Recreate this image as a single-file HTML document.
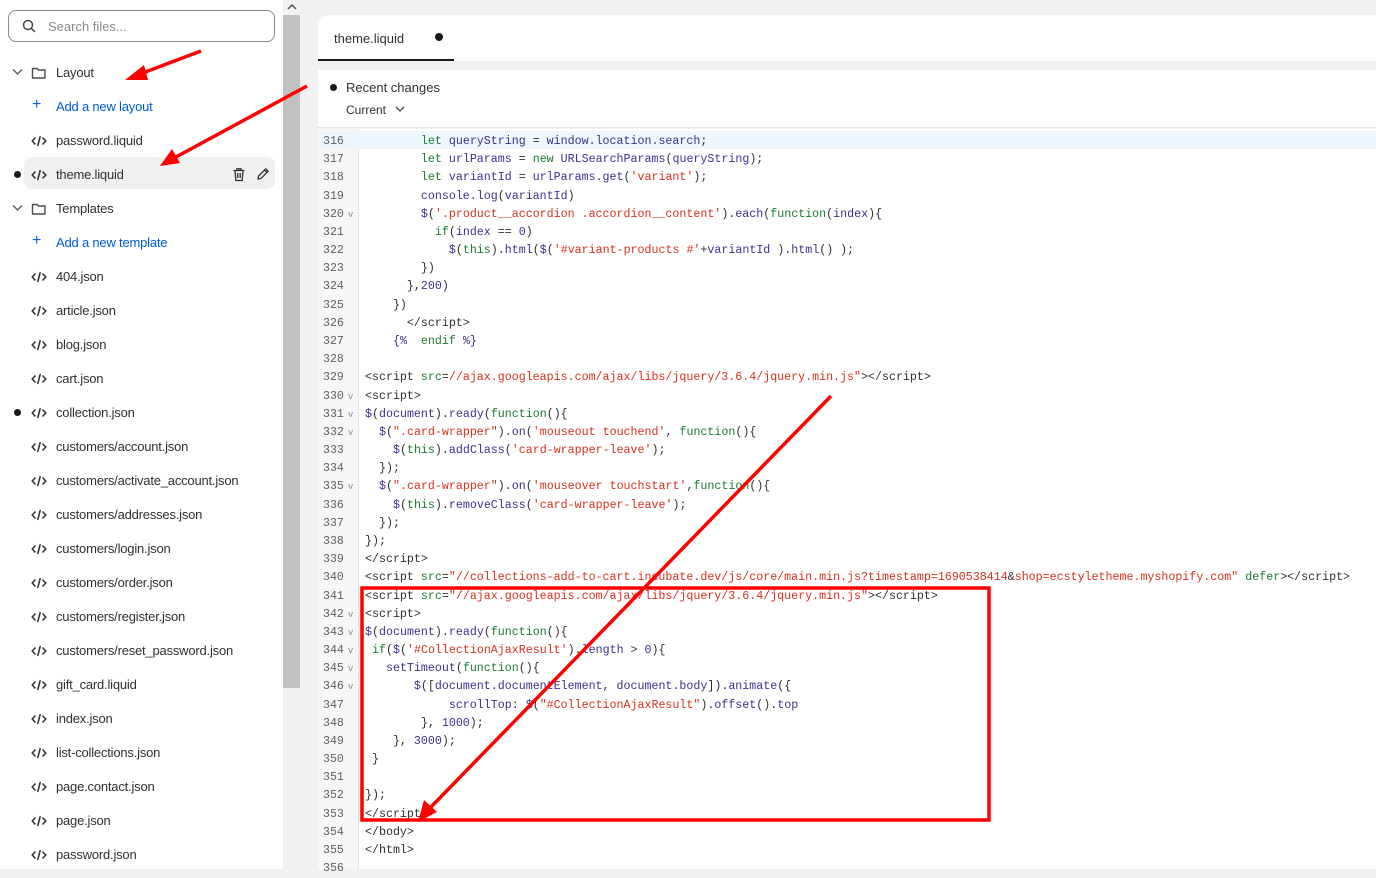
<!DOCTYPE html>
<html><head><meta charset="utf-8"><style>
*{margin:0;padding:0;box-sizing:border-box}
body{width:1376px;height:869px;overflow:hidden;background:#f1f1f1;font-family:"Liberation Sans",sans-serif;position:relative}
#side{position:absolute;left:0;top:0;width:283px;height:869px;background:#fff}
.search{position:absolute;left:8px;top:10px;width:267px;height:32px;border:1px solid #8a8a8a;border-radius:8px;font-size:13px;color:#8a8a8a;padding:8px 0 0 39px}
.it{position:absolute;left:0;height:34px;width:283px;font-size:13px;color:#303030;letter-spacing:-0.2px}
.it span.t{position:absolute;left:56px;top:10px}
.it.blue span.t{color:#005bd3}
.ic{position:absolute;left:31px;top:11px}
.dot{position:absolute;left:14px;top:14px;width:7px;height:7px;border-radius:50%;background:#1a1a1a}
.sel{position:absolute;left:24px;top:157px;width:251px;height:32px;background:#f0f0f0;border-radius:8px}
#sb{position:absolute;left:283px;top:0;width:17px;height:869px;background:#f1f1f1}
#thumb{position:absolute;left:283px;top:15px;width:17px;height:673px;background:#c1c1c1}
#top{position:absolute;left:318px;top:15px;width:1058px;height:46px;background:#fff;border-top-left-radius:12px}
#tab{position:absolute;left:318px;top:59px;width:136px;height:2px;background:#1a1a1a}
#rc{position:absolute;left:318px;top:70px;width:1058px;height:58px;background:#fff;border-bottom:1px solid #e3e3e3}
#gut{position:absolute;left:318px;top:129px;width:41px;height:740px;background:#f7f7f7;border-right:1px solid #e3e3e3}
#code{position:absolute;left:359px;top:129px;width:1017px;height:740px;background:#fff}
.hl{position:absolute;left:318px;top:131px;width:1058px;height:18px;background:#eef7fe}
.ln{position:absolute;left:318px;width:41px;font:11.6px "Liberation Mono",monospace;color:#616161;padding-left:5px;height:18px;line-height:18px}
.ln i{font-style:normal;font-size:9px;color:#888;margin-left:4px}
.cl{position:absolute;left:365px;font:11.65px "Liberation Mono",monospace;color:#303030;white-space:pre;line-height:18px;height:18px}
.k{color:#1b7b32}.v{color:#3f2f8f}.s{color:#d6301f}
</style></head><body>
<div id="side">
<div class="search">Search files...</div>
<svg style="position:absolute;left:22px;top:19px" width="14" height="14" viewBox="0 0 14 14"><circle cx="6" cy="6" r="4.5" fill="none" stroke="#4a4a4a" stroke-width="1.5"/><path d="M9.3 9.3L13 13" stroke="#4a4a4a" stroke-width="1.5"/></svg>
<div class="sel"></div>
</div>
<div id="items"></div>
<div id="sb"></div><div id="thumb"></div>
<svg style="position:absolute;left:286px;top:2px" width="12" height="10"><path d="M2 7L6 3L10 7" fill="none" stroke="#555" stroke-width="1.5"/></svg>
<div id="top"><span style="position:absolute;left:16px;top:16px;font-size:13px;color:#303030">theme.liquid</span><span style="position:absolute;left:117px;top:18px;width:8px;height:8px;border-radius:50%;background:#1a1a1a"></span></div>
<div id="tab"></div>
<div id="rc"><span style="position:absolute;left:12px;top:14px;width:7px;height:7px;border-radius:50%;background:#1a1a1a"></span><span style="position:absolute;left:28px;top:10px;font-size:13px;color:#303030">Recent changes</span><span style="position:absolute;left:28px;top:33px;font-size:12px;color:#303030">Current</span><svg style="position:absolute;left:77px;top:35px" width="10" height="8"><path d="M1 2L5 6L9 2" fill="none" stroke="#444" stroke-width="1.3"/></svg></div>
<div id="gut"></div><div id="code"></div><div class="hl"></div>
<div id="lines"></div>
<svg style="position:absolute;left:0;top:0" width="1376" height="869">
<rect x="362" y="588" width="627" height="232" fill="none" stroke="#f00" stroke-width="3.5"/>
<g stroke="#f00" stroke-width="3.5" fill="#f00">
<line x1="201" y1="51" x2="140" y2="74"/><polygon points="125,80 144,65 148,80" stroke="none"/>
<line x1="307" y1="86" x2="176" y2="157"/><polygon points="160,166 172,149 180,163" stroke="none"/>
<line x1="831" y1="396" x2="430" y2="808"/><polygon points="418,822 424,800 437,812" stroke="none"/>
</g></svg>
<script>
const folder='<svg class="ic" width="16" height="14" viewBox="0 0 16 14"><path d="M1.5 2.5h4.5l1.5 1.5h6.5v8H1.5z" fill="none" stroke="#4a4a4a" stroke-width="1.4" stroke-linejoin="round"/></svg>';
const code='<svg class="ic" width="16" height="14" viewBox="0 0 16 14"><path d="M4.5 3.5L1.2 7l3.3 3.5M11.5 3.5L14.8 7l-3.3 3.5M9.3 2L6.7 12" fill="none" stroke="#303030" stroke-width="1.5"/></svg>';
const plus='<span style="position:absolute;left:32px;top:7px;color:#005bd3;font-size:16px">+</span>';
const chev='<svg style="position:absolute;left:12px;top:13px" width="11" height="8"><path d="M1 1.5L5.5 6L10 1.5" fill="none" stroke="#555" stroke-width="1.3"/></svg>';
const items=[['f','Layout'],['a','Add a new layout'],['c','password.liquid'],['c','theme.liquid',1],['f','Templates'],['a','Add a new template'],['c','404.json'],['c','article.json'],['c','blog.json'],['c','cart.json'],['c','collection.json',1],['c','customers/account.json'],['c','customers/activate_account.json'],['c','customers/addresses.json'],['c','customers/login.json'],['c','customers/order.json'],['c','customers/register.json'],['c','customers/reset_password.json'],['c','gift_card.liquid'],['c','index.json'],['c','list-collections.json'],['c','page.contact.json'],['c','page.json'],['c','password.json']];
let h='';items.forEach((it,i)=>{const y=55+i*34;let inner='';
if(it[0]=='f')inner=chev+folder;else if(it[0]=='a')inner=plus;else inner=code;
if(it[2])inner+='<span class="dot"></span>';
if(i==3)inner+='<svg style="position:absolute;left:232px;top:10px" width="14" height="15" viewBox="0 0 14 15"><path d="M1.5 3.5h11M5 3.5V1.8h4v1.7M3 3.5l.8 10h6.4l.8-10M5.8 6v5M8.2 6v5" fill="none" stroke="#303030" stroke-width="1.3"/></svg><svg style="position:absolute;left:256px;top:10px" width="14" height="14" viewBox="0 0 14 14"><path d="M2 12l.6-3L9.8 1.8l2.4 2.4L5 11.4z M8.5 3l2.4 2.4" fill="none" stroke="#303030" stroke-width="1.3" stroke-linejoin="round"/></svg>';
h+=`<div class="it${it[0]=='a'?' blue':''}" style="top:${y}px">${inner}<span class="t">${it[1]}</span></div>`});
document.getElementById('items').innerHTML=h;
const L=[
['        <span class="k">let</span> <span class="v">queryString</span> = <span class="v">window.location.search</span>;'],
['        <span class="k">let</span> <span class="v">urlParams</span> = <span class="k">new</span> <span class="v">URLSearchParams</span>(<span class="v">queryString</span>);'],
['        <span class="k">let</span> <span class="v">variantId</span> = <span class="v">urlParams.get</span>(<span class="s">\'variant\'</span>);'],
['        <span class="v">console.log</span>(<span class="v">variantId</span>)'],
['        <span class="v">$</span>(<span class="s">\'.product__accordion .accordion__content\'</span>).<span class="v">each</span>(<span class="k">function</span>(<span class="v">index</span>){',1],
['          <span class="k">if</span>(<span class="v">index</span> == <span class="v">0</span>)'],
['            <span class="v">$</span>(<span class="k">this</span>).<span class="v">html</span>(<span class="v">$</span>(<span class="s">\'#variant-products #\'</span>+<span class="v">variantId</span> ).<span class="v">html</span>() );'],
['        })'],
['      },<span class="v">200</span>)'],
['    })'],
['      &lt;/script&gt;'],
['    <span class="v">{%</span>  <span class="k">endif</span> <span class="v">%}</span>'],
[''],
['&lt;script <span class="k">src</span>=<span class="s">//ajax.googleapis.com/ajax/libs/jquery/3.6.4/jquery.min.js"</span>&gt;&lt;/script&gt;'],
['&lt;script&gt;',1],
['<span class="v">$</span>(<span class="v">document</span>).<span class="v">ready</span>(<span class="k">function</span>(){',1],
['  <span class="v">$</span>(<span class="s">".card-wrapper"</span>).<span class="v">on</span>(<span class="s">\'mouseout touchend\'</span>, <span class="k">function</span>(){',1],
['    <span class="v">$</span>(<span class="k">this</span>).<span class="v">addClass</span>(<span class="s">\'card-wrapper-leave\'</span>);'],
['  });'],
['  <span class="v">$</span>(<span class="s">".card-wrapper"</span>).<span class="v">on</span>(<span class="s">\'mouseover touchstart\'</span>,<span class="k">function</span>(){',1],
['    <span class="v">$</span>(<span class="k">this</span>).<span class="v">removeClass</span>(<span class="s">\'card-wrapper-leave\'</span>);'],
['  });'],
['});'],
['&lt;/script&gt;'],
['&lt;script <span class="k">src</span>=<span class="s">"//collections-add-to-cart.incubate.dev/js/core/main.min.js?timestamp=1690538414</span>&amp;<span class="s">shop=ecstyletheme.myshopify.com"</span> <span class="k">defer</span>&gt;&lt;/script&gt;'],
['&lt;script <span class="k">src</span>=<span class="s">"//ajax.googleapis.com/ajax/libs/jquery/3.6.4/jquery.min.js"</span>&gt;&lt;/script&gt;'],
['&lt;script&gt;',1],
['<span class="v">$</span>(<span class="v">document</span>).<span class="v">ready</span>(<span class="k">function</span>(){',1],
[' <span class="k">if</span>(<span class="v">$</span>(<span class="s">\'#CollectionAjaxResult\'</span>).<span class="v">length</span> &gt; <span class="v">0</span>){',1],
['   <span class="v">setTimeout</span>(<span class="k">function</span>(){',1],
['       <span class="v">$</span>([<span class="v">document.documentElement</span>, <span class="v">document.body</span>]).<span class="v">animate</span>({',1],
['            <span class="v">scrollTop</span>: <span class="v">$</span>(<span class="s">"#CollectionAjaxResult"</span>).<span class="v">offset</span>().<span class="v">top</span>'],
['        }, <span class="v">1000</span>);'],
['    }, <span class="v">3000</span>);'],
[' }'],
[''],
['});'],
['&lt;/script&gt;'],
['&lt;/body&gt;'],
['&lt;/html&gt;'],
['']];
let c='';L.forEach((l,i)=>{const y=133+i*18.18;
c+=`<div class="ln" style="top:${y}px">${316+i}${l[1]?'<i>v</i>':''}</div><div class="cl" style="top:${y}px">${l[0]}</div>`});
document.getElementById('lines').innerHTML=c;
</script>
</body></html>
